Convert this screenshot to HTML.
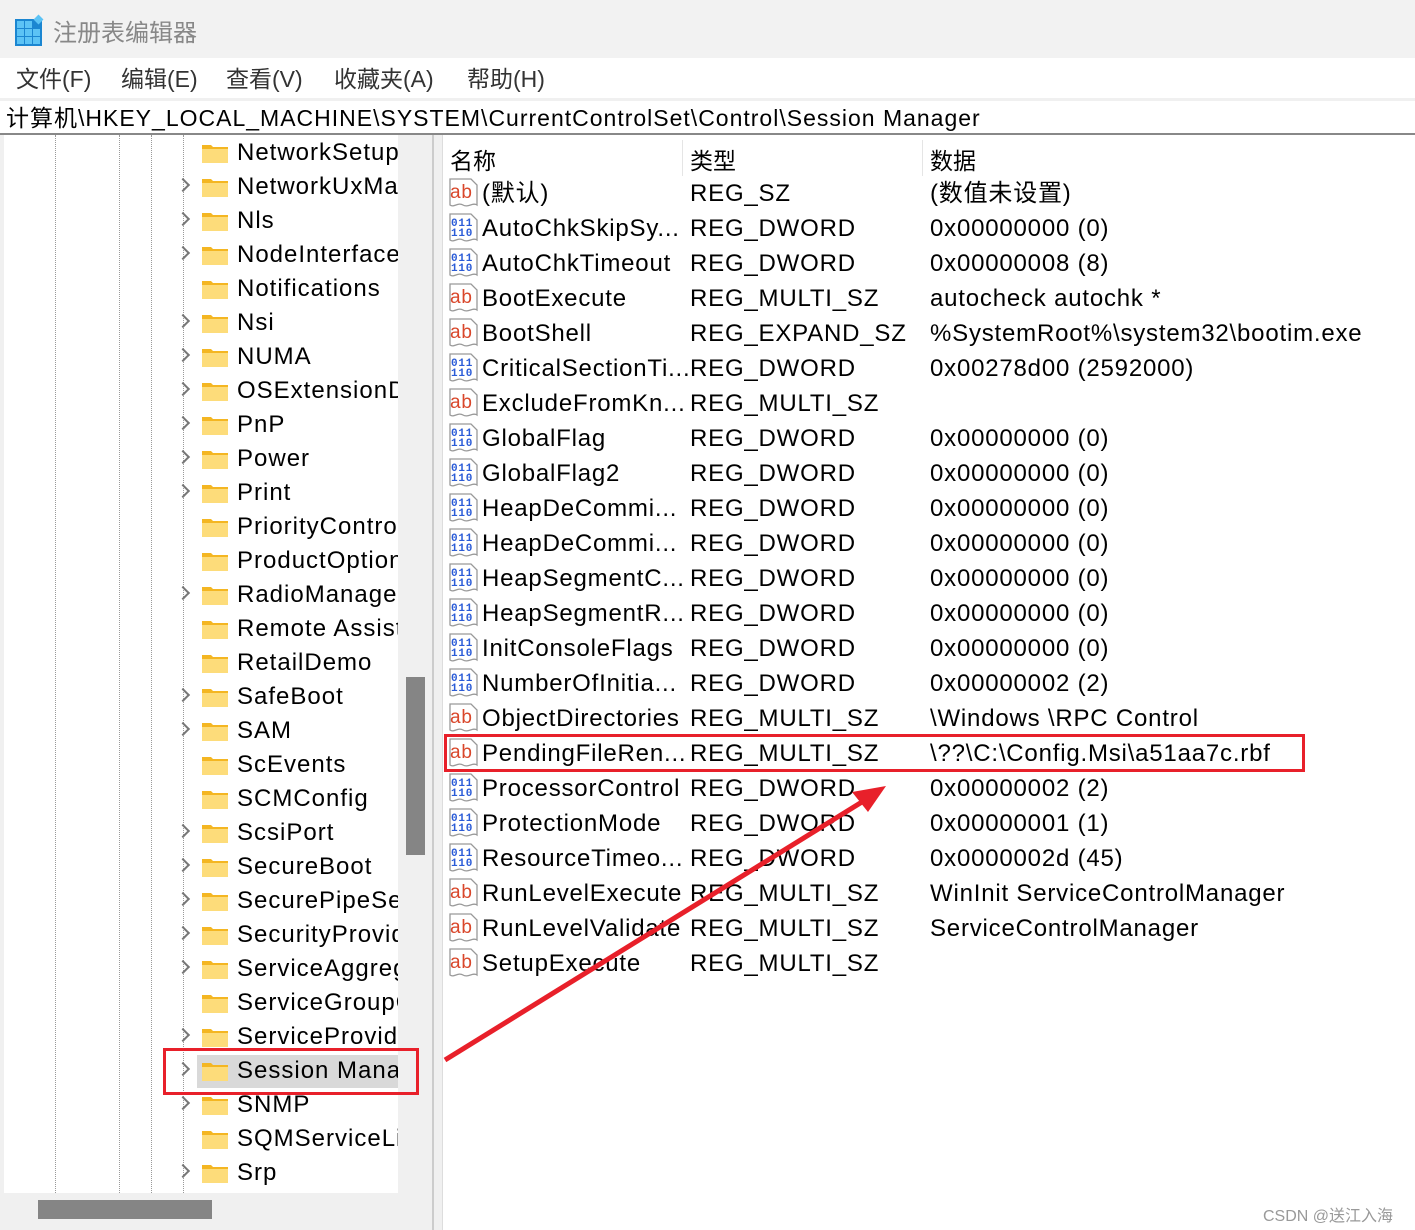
<!DOCTYPE html><html><head><meta charset="utf-8"><style>
*{margin:0;padding:0;box-sizing:border-box}
body{width:1415px;height:1230px;position:relative;overflow:hidden;background:#fff;font-family:"Liberation Sans","Noto Sans CJK SC",sans-serif;color:#000}
.a{position:absolute;white-space:nowrap}
#title{left:0;top:0;width:1415px;height:58px;background:#f2f2f2}
#menu{left:0;top:58px;width:1415px;height:37px;background:#fff;font-size:23px;color:#333}
#addr{left:0;top:98px;width:1415px;height:35px;background:#fff;border-top:3px solid #f0f0f0;font-size:23px;line-height:34px;padding-left:6px;letter-spacing:1px}
#tree{left:4px;top:135px;width:394px;height:1058px;background:#fff;overflow:hidden}
.tr{position:absolute;left:0;height:34px;width:394px;font-size:24px;line-height:34px;letter-spacing:1px}
.tr .t{position:absolute;left:233px}
.chev{position:absolute;left:174px;top:10px;width:10px;height:10px;border-right:2px solid #777;border-top:2px solid #777;transform:rotate(45deg)}
.fold{position:absolute;left:197px;top:6px;width:28px;height:22px}
.rr{position:absolute;left:442px;height:35px;width:973px;font-size:24px;line-height:35px;letter-spacing:0.8px}
.rr span{position:absolute}
.ic{position:absolute;left:6px;top:2px;width:32px;height:32px}
</style></head><body>
<div class="a" id="title">
<svg class="a" style="left:15px;top:14px" width="30" height="32" viewBox="0 0 30 32"><rect x="0" y="5" width="27" height="27" fill="#1b86d1"/><g fill="#5cc3f5"><rect x="2" y="7" width="7" height="7"/><rect x="10" y="7" width="7" height="7"/><rect x="2" y="15" width="7" height="7"/><rect x="10" y="15" width="7" height="7"/><rect x="18" y="15" width="7" height="7"/><rect x="2" y="23" width="7" height="7"/><rect x="10" y="23" width="7" height="7"/><rect x="18" y="23" width="7" height="7"/></g><rect x="20" y="2" width="7" height="7" fill="#5cc3f5" transform="rotate(45 23.5 5.5)"/></svg>
<div class="a" style="left:53px;top:13px;font-size:24px;color:#888">注册表编辑器</div></div>
<div class="a" id="menu"><span class="a" style="left:16px;top:2px">文件(F)</span><span class="a" style="left:121px;top:2px">编辑(E)</span><span class="a" style="left:226px;top:2px">查看(V)</span><span class="a" style="left:334px;top:2px">收藏夹(A)</span><span class="a" style="left:467px;top:2px">帮助(H)</span></div>
<div class="a" id="addr">计算机\HKEY_LOCAL_MACHINE\SYSTEM\CurrentControlSet\Control\Session Manager</div>
<div class="a" style="left:0;top:133px;width:1415px;height:2px;background:#888"></div>
<div class="a" style="left:0;top:135px;width:442px;height:1095px;background:#f0f0f0"></div>
<div class="a" style="left:432px;top:135px;width:2px;height:1095px;background:#ccc"></div>
<div class="a" id="tree">
<div class="a" style="left:51px;top:0;height:1058px;border-left:1px dotted #999"></div>
<div class="a" style="left:115px;top:0;height:1058px;border-left:1px dotted #999"></div>
<div class="a" style="left:147px;top:0;height:1058px;border-left:1px dotted #999"></div>
<div class="a" style="left:179px;top:0;height:1058px;border-left:1px dotted #999"></div>
<svg width="0" height="0" style="position:absolute"><defs><g id="f"><path d="M1 3h9l2 2h15v16H1z" fill="#f4b622"/><path d="M1 7h26v14H1z" fill="#fddc7a"/></g></defs></svg>
<div class="tr" style="top:1px"><svg class="fold"><use href="#f"/></svg><span class="t">NetworkSetup</span></div>
<div class="tr" style="top:35px"><i class="chev"></i><svg class="fold"><use href="#f"/></svg><span class="t">NetworkUxManager</span></div>
<div class="tr" style="top:69px"><i class="chev"></i><svg class="fold"><use href="#f"/></svg><span class="t">Nls</span></div>
<div class="tr" style="top:103px"><i class="chev"></i><svg class="fold"><use href="#f"/></svg><span class="t">NodeInterfaces</span></div>
<div class="tr" style="top:137px"><svg class="fold"><use href="#f"/></svg><span class="t">Notifications</span></div>
<div class="tr" style="top:171px"><i class="chev"></i><svg class="fold"><use href="#f"/></svg><span class="t">Nsi</span></div>
<div class="tr" style="top:205px"><i class="chev"></i><svg class="fold"><use href="#f"/></svg><span class="t">NUMA</span></div>
<div class="tr" style="top:239px"><i class="chev"></i><svg class="fold"><use href="#f"/></svg><span class="t">OSExtensionDatabase</span></div>
<div class="tr" style="top:273px"><i class="chev"></i><svg class="fold"><use href="#f"/></svg><span class="t">PnP</span></div>
<div class="tr" style="top:307px"><i class="chev"></i><svg class="fold"><use href="#f"/></svg><span class="t">Power</span></div>
<div class="tr" style="top:341px"><i class="chev"></i><svg class="fold"><use href="#f"/></svg><span class="t">Print</span></div>
<div class="tr" style="top:375px"><svg class="fold"><use href="#f"/></svg><span class="t">PriorityControl</span></div>
<div class="tr" style="top:409px"><svg class="fold"><use href="#f"/></svg><span class="t">ProductOptions</span></div>
<div class="tr" style="top:443px"><i class="chev"></i><svg class="fold"><use href="#f"/></svg><span class="t">RadioManagement</span></div>
<div class="tr" style="top:477px"><svg class="fold"><use href="#f"/></svg><span class="t">Remote Assistance</span></div>
<div class="tr" style="top:511px"><svg class="fold"><use href="#f"/></svg><span class="t">RetailDemo</span></div>
<div class="tr" style="top:545px"><i class="chev"></i><svg class="fold"><use href="#f"/></svg><span class="t">SafeBoot</span></div>
<div class="tr" style="top:579px"><i class="chev"></i><svg class="fold"><use href="#f"/></svg><span class="t">SAM</span></div>
<div class="tr" style="top:613px"><svg class="fold"><use href="#f"/></svg><span class="t">ScEvents</span></div>
<div class="tr" style="top:647px"><svg class="fold"><use href="#f"/></svg><span class="t">SCMConfig</span></div>
<div class="tr" style="top:681px"><i class="chev"></i><svg class="fold"><use href="#f"/></svg><span class="t">ScsiPort</span></div>
<div class="tr" style="top:715px"><i class="chev"></i><svg class="fold"><use href="#f"/></svg><span class="t">SecureBoot</span></div>
<div class="tr" style="top:749px"><i class="chev"></i><svg class="fold"><use href="#f"/></svg><span class="t">SecurePipeServers</span></div>
<div class="tr" style="top:783px"><i class="chev"></i><svg class="fold"><use href="#f"/></svg><span class="t">SecurityProviders</span></div>
<div class="tr" style="top:817px"><i class="chev"></i><svg class="fold"><use href="#f"/></svg><span class="t">ServiceAggregatedEvents</span></div>
<div class="tr" style="top:851px"><svg class="fold"><use href="#f"/></svg><span class="t">ServiceGroupOrder</span></div>
<div class="tr" style="top:885px"><i class="chev"></i><svg class="fold"><use href="#f"/></svg><span class="t">ServiceProvider</span></div>
<div class="tr" style="top:919px"><div class="a" style="left:193px;top:1px;width:201px;height:33px;background:#d9d9d9"></div><i class="chev"></i><svg class="fold"><use href="#f"/></svg><span class="t">Session Manager</span></div>
<div class="tr" style="top:953px"><i class="chev"></i><svg class="fold"><use href="#f"/></svg><span class="t">SNMP</span></div>
<div class="tr" style="top:987px"><svg class="fold"><use href="#f"/></svg><span class="t">SQMServiceList</span></div>
<div class="tr" style="top:1021px"><i class="chev"></i><svg class="fold"><use href="#f"/></svg><span class="t">Srp</span></div>
</div>
<div class="a" style="left:406px;top:677px;width:19px;height:178px;background:#858585"></div>
<div class="a" style="left:38px;top:1200px;width:174px;height:19px;background:#858585"></div>
<div class="a" style="left:163px;top:1048px;width:256px;height:47px;border:3px solid #e8202a"></div>
<div class="a" style="left:442px;top:135px;width:973px;height:1095px;background:#fff;border-left:1px solid #ddd"></div>
<div class="a" style="left:450px;top:142px;font-size:23px">名称</div>
<div class="a" style="left:682px;top:140px;width:1px;height:36px;background:#e5e5e5"></div>
<div class="a" style="left:690px;top:142px;font-size:23px">类型</div>
<div class="a" style="left:922px;top:140px;width:1px;height:36px;background:#e5e5e5"></div>
<div class="a" style="left:930px;top:142px;font-size:23px">数据</div>
<svg width="0" height="0" style="position:absolute"><defs>
<g id="doc"><path d="M2 1h21l6 6v20c-4-3-9 3-14 0s-9 3-13 0z" fill="#fff" stroke="#999" stroke-width="1.3"/></g>
<g id="ab"><use href="#doc"/><text x="2" y="20" font-family="Liberation Sans" font-size="19" fill="#d9472b">ab</text></g>
<g id="bin"><use href="#doc"/><text x="3" y="13" font-family="Liberation Mono" font-size="11" font-weight="bold" fill="#2a5bd7">011</text><text x="3" y="23" font-family="Liberation Mono" font-size="11" font-weight="bold" fill="#2a5bd7">110</text></g>
</defs></svg>
<div class="rr" style="top:176px"><svg class="ic"><use href="#ab"/></svg><span style="left:40px">(默认)</span><span style="left:248px">REG_SZ</span><span style="left:488px">(数值未设置)</span></div>
<div class="rr" style="top:211px"><svg class="ic"><use href="#bin"/></svg><span style="left:40px">AutoChkSkipSy...</span><span style="left:248px">REG_DWORD</span><span style="left:488px">0x00000000 (0)</span></div>
<div class="rr" style="top:246px"><svg class="ic"><use href="#bin"/></svg><span style="left:40px">AutoChkTimeout</span><span style="left:248px">REG_DWORD</span><span style="left:488px">0x00000008 (8)</span></div>
<div class="rr" style="top:281px"><svg class="ic"><use href="#ab"/></svg><span style="left:40px">BootExecute</span><span style="left:248px">REG_MULTI_SZ</span><span style="left:488px">autocheck autochk *</span></div>
<div class="rr" style="top:316px"><svg class="ic"><use href="#ab"/></svg><span style="left:40px">BootShell</span><span style="left:248px">REG_EXPAND_SZ</span><span style="left:488px">%SystemRoot%\system32\bootim.exe</span></div>
<div class="rr" style="top:351px"><svg class="ic"><use href="#bin"/></svg><span style="left:40px">CriticalSectionTi...</span><span style="left:248px">REG_DWORD</span><span style="left:488px">0x00278d00 (2592000)</span></div>
<div class="rr" style="top:386px"><svg class="ic"><use href="#ab"/></svg><span style="left:40px">ExcludeFromKn...</span><span style="left:248px">REG_MULTI_SZ</span></div>
<div class="rr" style="top:421px"><svg class="ic"><use href="#bin"/></svg><span style="left:40px">GlobalFlag</span><span style="left:248px">REG_DWORD</span><span style="left:488px">0x00000000 (0)</span></div>
<div class="rr" style="top:456px"><svg class="ic"><use href="#bin"/></svg><span style="left:40px">GlobalFlag2</span><span style="left:248px">REG_DWORD</span><span style="left:488px">0x00000000 (0)</span></div>
<div class="rr" style="top:491px"><svg class="ic"><use href="#bin"/></svg><span style="left:40px">HeapDeCommi...</span><span style="left:248px">REG_DWORD</span><span style="left:488px">0x00000000 (0)</span></div>
<div class="rr" style="top:526px"><svg class="ic"><use href="#bin"/></svg><span style="left:40px">HeapDeCommi...</span><span style="left:248px">REG_DWORD</span><span style="left:488px">0x00000000 (0)</span></div>
<div class="rr" style="top:561px"><svg class="ic"><use href="#bin"/></svg><span style="left:40px">HeapSegmentC...</span><span style="left:248px">REG_DWORD</span><span style="left:488px">0x00000000 (0)</span></div>
<div class="rr" style="top:596px"><svg class="ic"><use href="#bin"/></svg><span style="left:40px">HeapSegmentR...</span><span style="left:248px">REG_DWORD</span><span style="left:488px">0x00000000 (0)</span></div>
<div class="rr" style="top:631px"><svg class="ic"><use href="#bin"/></svg><span style="left:40px">InitConsoleFlags</span><span style="left:248px">REG_DWORD</span><span style="left:488px">0x00000000 (0)</span></div>
<div class="rr" style="top:666px"><svg class="ic"><use href="#bin"/></svg><span style="left:40px">NumberOfInitia...</span><span style="left:248px">REG_DWORD</span><span style="left:488px">0x00000002 (2)</span></div>
<div class="rr" style="top:701px"><svg class="ic"><use href="#ab"/></svg><span style="left:40px">ObjectDirectories</span><span style="left:248px">REG_MULTI_SZ</span><span style="left:488px">\Windows \RPC Control</span></div>
<div class="rr" style="top:736px"><svg class="ic"><use href="#ab"/></svg><span style="left:40px">PendingFileRen...</span><span style="left:248px">REG_MULTI_SZ</span><span style="left:488px">\??\C:\Config.Msi\a51aa7c.rbf</span></div>
<div class="rr" style="top:771px"><svg class="ic"><use href="#bin"/></svg><span style="left:40px">ProcessorControl</span><span style="left:248px">REG_DWORD</span><span style="left:488px">0x00000002 (2)</span></div>
<div class="rr" style="top:806px"><svg class="ic"><use href="#bin"/></svg><span style="left:40px">ProtectionMode</span><span style="left:248px">REG_DWORD</span><span style="left:488px">0x00000001 (1)</span></div>
<div class="rr" style="top:841px"><svg class="ic"><use href="#bin"/></svg><span style="left:40px">ResourceTimeo...</span><span style="left:248px">REG_DWORD</span><span style="left:488px">0x0000002d (45)</span></div>
<div class="rr" style="top:876px"><svg class="ic"><use href="#ab"/></svg><span style="left:40px">RunLevelExecute</span><span style="left:248px">REG_MULTI_SZ</span><span style="left:488px">WinInit ServiceControlManager</span></div>
<div class="rr" style="top:911px"><svg class="ic"><use href="#ab"/></svg><span style="left:40px">RunLevelValidate</span><span style="left:248px">REG_MULTI_SZ</span><span style="left:488px">ServiceControlManager</span></div>
<div class="rr" style="top:946px"><svg class="ic"><use href="#ab"/></svg><span style="left:40px">SetupExecute</span><span style="left:248px">REG_MULTI_SZ</span></div>
<div class="a" style="left:444px;top:734px;width:861px;height:38px;border:3px solid #e8202a"></div>
<svg class="a" style="left:0;top:0" width="1415" height="1230"><line x1="445" y1="1060" x2="870" y2="797" stroke="#e8202a" stroke-width="5"/><path d="M886 786 L852 792 L868 812 Z" fill="#e8202a"/></svg>
<div class="a" style="left:1263px;top:1202px;font-size:16px;color:#999">CSDN @送江入海</div>
</body></html>
